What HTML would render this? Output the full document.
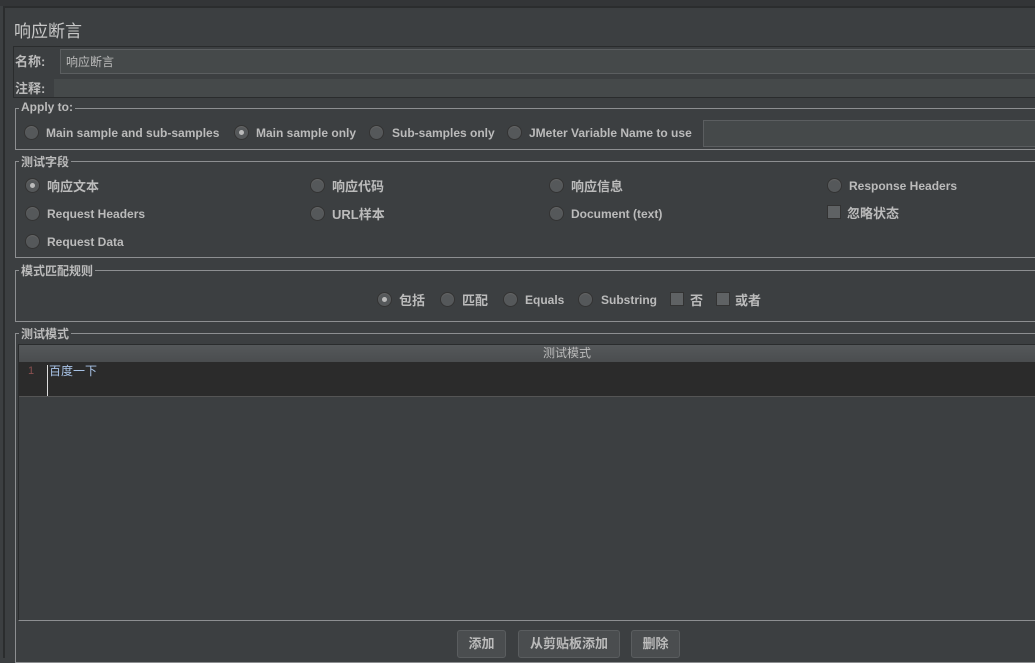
<!DOCTYPE html>
<html><head><meta charset="utf-8"><style>
*{margin:0;padding:0;box-sizing:border-box}
body{width:1035px;height:658px;background:#3c3f41;position:relative;overflow:hidden;font-family:"Liberation Sans","Noto Sans CJK SC",sans-serif;font-size:12px;color:#bbbbbb;font-weight:bold}
.a{position:absolute}
.t{position:absolute;white-space:nowrap}
.rb{position:absolute;width:15px;height:15px;border-radius:50%;background:#55585a;border:1px solid #333;box-shadow:inset 0 1px 1px #666;margin:-1px 0 0 -1px}
.rb.on::after{content:"";position:absolute;left:4px;top:4px;width:5px;height:5px;border-radius:50%;background:#bbb}
.cb{position:absolute;width:14px;height:14px;background:#5f6264;border:1px solid #333}
.grp{position:absolute;border:1px solid #8d8f91;border-right:none}
.lg{position:absolute;background:#3c3f41;padding:0 2px;top:-9px;left:3px;font-size:12px}
.btn{position:absolute;top:630px;height:28px;border:1px solid #5a5d5f;border-radius:3px;background:#4a4d4f;text-align:center;line-height:26px;font-size:13px}
.c{margin-top:-2px}
</style></head><body>
<div class="a" style="left:0;top:0;width:1035px;height:6px;background:#333537"></div>
<div class="a" style="left:3px;top:6px;width:1032px;height:652px;border-left:2px solid #2b2d2e;border-top:2px solid #2b2d2e"></div>
<div class="t" style="left:14px;top:17px;font-size:17px;font-weight:normal;color:#c8c8c8">响应断言</div>
<div class="a" style="left:13px;top:46px;width:1022px;height:52px;border:1px solid #2a2c2d;border-right:none"></div>
<div class="t" style="left:15px;top:51px;font-size:13px">名称:</div>
<div class="a" style="left:60px;top:49px;width:975px;height:25px;background:#45494a;border:1px solid #5b5e60;border-right:none"></div>
<div class="t" style="left:66px;top:53px;font-weight:normal;font-size:12px">响应断言</div>
<div class="t" style="left:15px;top:78px;font-size:13px">注释:</div>
<div class="a" style="left:54px;top:79px;width:981px;height:18px;background:#45494a"></div>

<div class="grp" style="left:15px;top:108px;width:1020px;height:42px"><span class="lg">Apply to:</span></div>
<div class="rb" style="left:25px;top:126px"></div><div class="t" style="left:46px;top:126px">Main sample and sub-samples</div>
<div class="rb on" style="left:235px;top:126px"></div><div class="t" style="left:256px;top:126px">Main sample only</div>
<div class="rb" style="left:370px;top:126px"></div><div class="t" style="left:392px;top:126px">Sub-samples only</div>
<div class="rb" style="left:508px;top:126px"></div><div class="t" style="left:529px;top:126px">JMeter Variable Name to use</div>
<div class="a" style="left:703px;top:120px;width:332px;height:27px;background:#45494a;border:1px solid #5b5e60;border-right:none"></div>

<div class="grp" style="left:15px;top:161px;width:1020px;height:97px"><span class="lg">测试字段</span></div>
<div class="rb on" style="left:26px;top:179px"></div><div class="t c" style="left:47px;top:178px;font-size:13px">响应文本</div>
<div class="rb" style="left:311px;top:179px"></div><div class="t c" style="left:332px;top:178px;font-size:13px">响应代码</div>
<div class="rb" style="left:550px;top:179px"></div><div class="t c" style="left:571px;top:178px;font-size:13px">响应信息</div>
<div class="rb" style="left:828px;top:179px"></div><div class="t" style="left:849px;top:179px">Response Headers</div>
<div class="rb" style="left:26px;top:207px"></div><div class="t" style="left:47px;top:207px">Request Headers</div>
<div class="rb" style="left:311px;top:207px"></div><div class="t c" style="left:332px;top:206px;font-size:13px">URL样本</div>
<div class="rb" style="left:550px;top:207px"></div><div class="t" style="left:571px;top:207px">Document (text)</div>
<div class="cb" style="left:827px;top:205px"></div><div class="t c" style="left:847px;top:205px;font-size:13px">忽略状态</div>
<div class="rb" style="left:26px;top:235px"></div><div class="t" style="left:47px;top:235px">Request Data</div>

<div class="grp" style="left:15px;top:270px;width:1020px;height:52px"><span class="lg">模式匹配规则</span></div>
<div class="rb on" style="left:378px;top:293px"></div><div class="t c" style="left:399px;top:292px;font-size:13px">包括</div>
<div class="rb" style="left:441px;top:293px"></div><div class="t c" style="left:462px;top:292px;font-size:13px">匹配</div>
<div class="rb" style="left:504px;top:293px"></div><div class="t" style="left:525px;top:293px">Equals</div>
<div class="rb" style="left:579px;top:293px"></div><div class="t" style="left:601px;top:293px">Substring</div>
<div class="cb" style="left:670px;top:292px"></div><div class="t c" style="left:690px;top:292px;font-size:13px">否</div>
<div class="cb" style="left:716px;top:292px"></div><div class="t c" style="left:735px;top:292px;font-size:13px">或者</div>

<div class="grp" style="left:15px;top:333px;width:1020px;height:330px"><span class="lg">测试模式</span></div>
<div class="a" style="left:18px;top:344px;width:1017px;height:277px;border-left:1px solid #2a2c2d;border-top:1px solid #2a2c2d;border-bottom:1px solid #8d8f91"></div>
<div class="a" style="left:19px;top:345px;width:1016px;height:17px;background:linear-gradient(#55585a,#4a4d4f);font-weight:normal;font-size:12px;color:#bbb"><span style="position:absolute;left:524px;top:0;line-height:17px">测试模式</span></div>
<div class="a" style="left:19px;top:362px;width:1016px;height:35px;background:#2b2b2b;border-bottom:1px solid #555"></div>
<div class="t" style="left:28px;top:365px;font-weight:normal;font-size:11px;color:#8a5050">1</div>
<div class="a" style="left:47px;top:365px;width:1px;height:31px;background:#ddd"></div>
<div class="t" style="left:49px;top:362px;font-weight:normal;font-size:12px;color:#a9c4e8">百度一下</div>

<div class="btn" style="left:457px;width:49px">添加</div>
<div class="btn" style="left:518px;width:102px">从剪贴板添加</div>
<div class="btn" style="left:631px;width:49px">删除</div>
</body></html>
